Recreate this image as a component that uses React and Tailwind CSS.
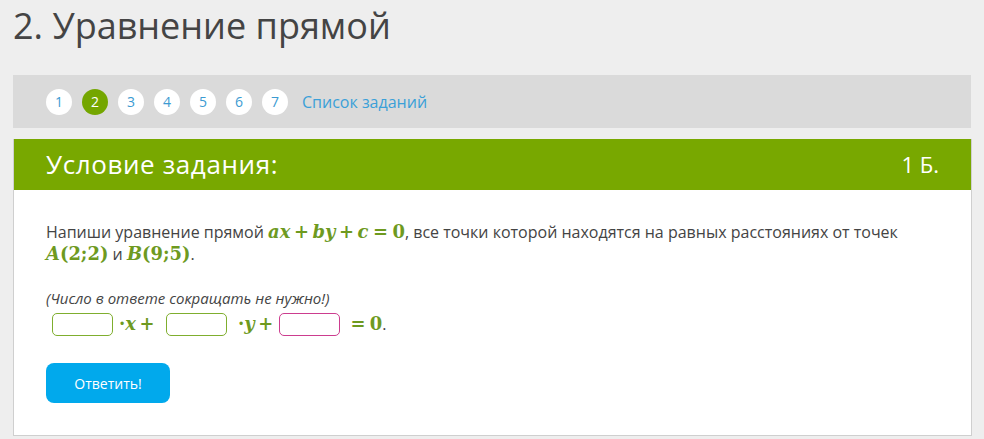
import React from 'react';

const serif = { fontFamily: '"DejaVu Serif", "Liberation Serif", serif' };

// math run, KaTeX-like sizing
const M = ({ children }) => (
  <span className="text-[1.12em] font-bold leading-none text-[#6e9a1f]" style={serif}>
    {children}
  </span>
);
const I = ({ children }) => <span className="italic">{children}</span>;
const Op = ({ children }) => <span className="mx-[0.2em]">{children}</span>;
const Rel = ({ children }) => <span className="mx-[0.25em]">{children}</span>;

const Pager = () => {
  const pages = [1, 2, 3, 4, 5, 6, 7];
  return (
    <div className="flex h-[53px] items-center gap-[10px] bg-[#dadada] pl-[33px]">
      {pages.map((n) => (
        <span
          key={n}
          className={`flex h-[26px] w-[26px] items-center justify-center rounded-full text-[14px] ${
            n === 2 ? 'bg-[#74a600] text-white' : 'bg-white text-[#3c9bd2]'
          }`}
        >
          {n}
        </span>
      ))}
      <span className="ml-[4px] text-[16px] text-[#3aa0d8]">Список заданий</span>
    </div>
  );
};

const Box = ({ pink }) => (
  <span
    className={`inline-block h-[23px] w-[61px] rounded-[5px] border bg-white ${
      pink ? 'border-[#cc3d8f]' : 'border-[#7fae2e]'
    }`}
  />
);

export default function App() {
  return (
    <div
      className="min-h-screen bg-[#eeeeee] px-[13px] pt-[1px] text-[#444]"
      style={{ fontFamily: '"Open Sans", "Noto Sans", sans-serif' }}
    >
      <h1 className="mt-[2px] h-[72px] text-[36px] leading-[46px] text-[#444]">2. Уравнение прямой</h1>
      <Pager />
      <div className="mt-[11px] w-[959px] border-r border-b border-l border-[#cfcfcf]">
        <div className="flex h-[51px] items-center justify-between bg-[#78a800] px-[32px] text-white">
          <span className="text-[26px] tracking-[0.6px]">Условие задания:</span>
          <span className="text-[22px]">1 Б.</span>
        </div>
        <div className="h-[245px] bg-white px-[32px] pt-[31px]">
          <p className="text-[16px] leading-[22px]">
            Напиши уравнение прямой{' '}
            <M>
              <I>ax</I>
              <Op>+</Op>
              <I>by</I>
              <Op>+</Op>
              <I>c</I>
              <Rel>=</Rel>0
            </M>
            , все точки которой находятся на равных расстояниях от точек
            <br />
            <M>
              <I>A</I>(2;2)
            </M>{' '}
            и{' '}
            <M>
              <I>B</I>(9;5)
            </M>
            .
          </p>
          <p className="mt-[22px] text-[15px] italic leading-[22px]">(Число в ответе сокращать не нужно!)</p>
          <div className="mt-[3px] flex h-[24px] items-center text-[16px]">
            <span className="ml-[6px] flex"><Box /></span>
            <span className="ml-[6px]">
              <M>
                ·<I>x</I>
                <Op>+</Op>
              </M>
            </span>
            <span className="ml-[8px] flex"><Box /></span>
            <span className="ml-[11px]">
              <M>
                ·<I>y</I>
                <Op>+</Op>
              </M>
            </span>
            <span className="ml-[2px] flex"><Box pink /></span>
            <span className="ml-[6px]">
              <M>
                <Rel>=</Rel>0
              </M>
            </span>
            <span>.</span>
          </div>
          <button className="mt-[27px] h-[40px] w-[124px] rounded-[8px] bg-[#01a9ec] text-[14px] text-white">
            Ответить!
          </button>
        </div>
      </div>
    </div>
  );
}
